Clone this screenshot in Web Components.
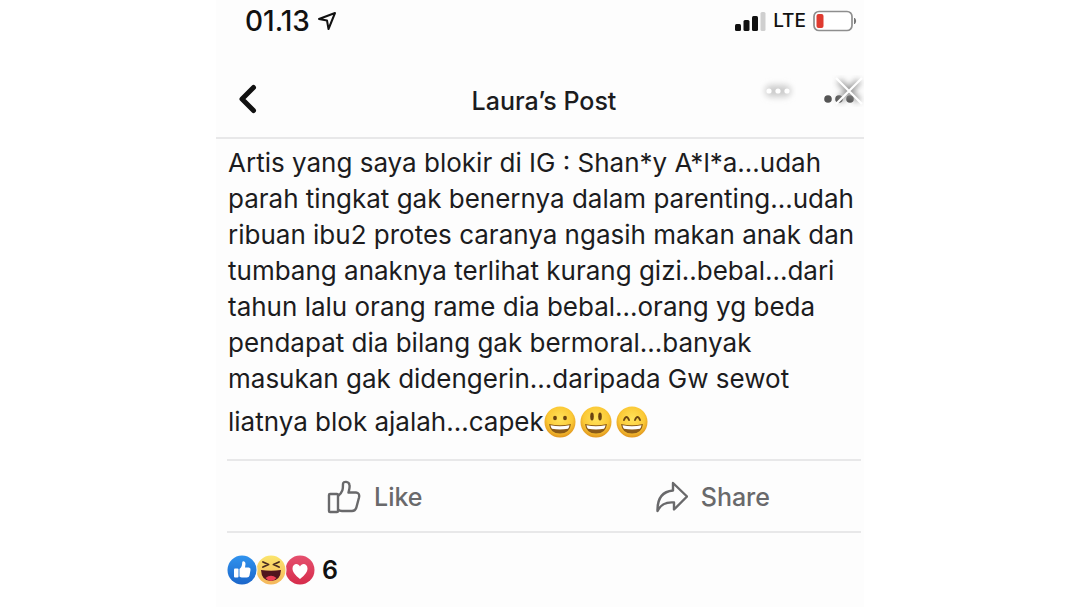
<!DOCTYPE html>
<html lang="id">
<head>
<meta charset="utf-8">
<meta name="viewport" content="width=device-width, initial-scale=1">
<title>Laura’s Post</title>
<style>
body { margin: 0; background: #fff; font-family: Inter, "Liberation Sans", sans-serif; color: #1c1c1e; }
</style>
</head>
<body>
<post-screen>
  <status-bar></status-bar>
  <nav-header>Laura’s Post</nav-header>
  <post-body></post-body>
  <post-actions></post-actions>
  <post-reactions count="6"></post-reactions>
</post-screen>
<script>
function define(name, html) {
  const template = document.createElement('template');
  template.innerHTML = html;
  customElements.define(name, class extends HTMLElement {
    constructor() {
      super();
      this.attachShadow({ mode: 'open' }).append(template.content.cloneNode(true));
    }
    connectedCallback() {
      const count = this.shadowRoot.querySelector('.count');
      if (count) count.textContent = this.getAttribute('count');
      const kind = this.getAttribute('kind');
      if (kind) for (const g of this.shadowRoot.querySelectorAll('g[data-kind]')) {
        if (g.dataset.kind !== kind) g.remove();
      }
    }
  });
}

define('post-screen', `
<style>
:host { display: block; box-sizing: border-box; width: 60%; min-height: 100vh; margin: 0 auto; background: #fdfdfd; }
</style>
<slot></slot>`);

define('status-bar', `
<style>
:host { display: flex; align-items: center; height: 42px; padding: 0 7px 0 29px; color: #111; }
.time { font-size: 28px; font-weight: 500; line-height: 30px; }
.net { font-size: 19px; font-weight: 500; line-height: 24px; margin: 0 7px; }
.arrow { margin-left: 7px; margin-right: auto; }
svg { display: block; }
</style>
<span class="time">01.13</span>
<svg class="arrow" width="20" height="20" viewBox="0 0 20 20" fill="none" stroke="#111" stroke-width="2" stroke-linejoin="round"><path d="M2 8 18 2 11.500 18 10 9.500Z"/></svg>
<svg width="31" height="20" viewBox="0 0 31 20"><g fill="#111"><rect y="13" width="6" height="7" rx="1.500"/><rect x="8.500" y="9" width="6" height="11" rx="1.500"/><rect x="17" y="5" width="6" height="15" rx="1.500"/></g><rect x="25.500" y="1" width="5" height="19" rx="1.500" fill="#cfcfcf"/></svg>
<span class="net">LTE</span>
<svg width="44" height="22" viewBox="0 0 44 22"><rect x="1" y="1.500" width="38" height="19" rx="5" fill="#fff" stroke="#8e8e8e" stroke-width="1.700"/><rect x="3.500" y="4" width="7" height="14" rx="2" fill="#df3b30"/><path d="M41.500 8q2.500 3 0 6z" fill="#777" stroke="#777"/></svg>`);

define('nav-header', `
<style>
:host { display: grid; grid-template-columns: 1fr auto 1fr; align-items: center; position: relative; height: 75px; padding: 20px 0 0 8px; border-bottom: 2px solid #e8e8e9; overflow: hidden; color: #1c1c1e; }
button { display: block; border: 0; background: none; padding: 0; color: inherit; }
.back { padding: 0 14px; justify-self: start; margin-bottom: 2px; }
h1 { margin: 0; padding-top: 2px; font-size: 25px; line-height: 30px; font-weight: 500; }
svg { display: block; }
.more { justify-self: end; margin-right: 8px; margin-bottom: 2px; }
.over { position: absolute; top: 33px; right: 0; display: flex; align-items: center; gap: 36px; }
</style>
<button class="back" aria-label="Back"><svg width="20" height="30" viewBox="0 0 20 30" fill="none" stroke="#111" stroke-width="5" stroke-linecap="round" stroke-linejoin="round"><path d="M15.500 3.500 4 15 15.500 26.500"/></svg></button>
<h1><slot></slot></h1>
<button class="more" aria-label="More"><svg width="32" height="10" viewBox="0 0 32 10" fill="#555"><circle cx="4" cy="5" r="3.800"/><circle cx="15" cy="5" r="3.800"/><circle cx="26" cy="5" r="3.800"/></svg></button>
<div class="over">
  <button aria-label="Options"><svg width="36" height="32" viewBox="0 0 36 32"><defs><filter id="d" x="-50%" y="-100%" width="200%" height="300%"><feGaussianBlur stdDeviation="3"/></filter></defs><rect x="5" y="10" width="26" height="12" rx="6" fill="#ccc" filter="url(#d)"/><g fill="#fff"><circle cx="9" cy="16" r="2.600"/><circle cx="18" cy="16" r="2.600"/><circle cx="27" cy="16" r="2.600"/></g></svg></button>
  <button aria-label="Close"><svg width="32" height="32" viewBox="0 0 32 32" fill="none"><defs><filter id="x" x="-50%" y="-50%" width="200%" height="200%"><feGaussianBlur stdDeviation="3"/></filter></defs><path d="M7 6 27 26M27 6 7 26" stroke="#888" stroke-width="5" filter="url(#x)"/><path d="M4 3 30 29M30 3 4 29" stroke="#fff" stroke-width="2.200"/></svg></button>
</div>`);

define('smile-face', `
<style>:host { display: inline-block; vertical-align: middle; } svg { display: block; }</style>
<svg width="32" height="32" viewBox="0 0 32 32" role="img" aria-label="smile">
<defs><radialGradient id="f" cx=".5" cy=".4" r=".62"><stop offset="0" stop-color="#ffe25a"/><stop offset=".65" stop-color="#fbc936"/><stop offset="1" stop-color="#dd901c"/></radialGradient></defs>
<circle cx="16" cy="16" r="15.500" fill="url(#f)"/>
<g data-kind="grin"><ellipse cx="11" cy="12" rx="1.900" ry="2.300" fill="#6b4310"/><ellipse cx="21" cy="12" rx="1.900" ry="2.300" fill="#6b4310"/></g>
<g data-kind="open"><ellipse cx="12" cy="10.500" rx="1.800" ry="4" fill="#6b4310"/><ellipse cx="20" cy="10.500" rx="1.800" ry="4" fill="#6b4310"/></g>
<g data-kind="happy"><path d="M8 14q2.500-6 5 0M19 14q2.500-6 5 0" fill="none" stroke="#6b4310" stroke-width="1.900" stroke-linecap="round"/></g>
<path d="M5 18q11 2.500 22 0-1 9.500-11 9.500T5 18z" fill="#8a5a18"/>
<path d="M6.500 19.200q9.500 2 19 0-.3 2-1.500 3.500-8 1.600-16 0-1.200-1.500-1.500-3.500z" fill="#fff"/>
</svg>`);

define('post-body', `
<style>
:host { display: block; padding: 6px 0 13px 12px; }
p { margin: 0; font-size: 26px; line-height: 36px; white-space: nowrap; }
.line { display: block; }
.last { display: flex; align-items: center; height: 49px; }
.faces { display: flex; gap: 4px; }
</style>
<p>
<span class="line">Artis yang saya blokir di IG : Shan*y A*l*a...udah</span>
<span class="line">parah tingkat gak benernya dalam parenting...udah</span>
<span class="line">ribuan ibu2 protes caranya ngasih makan anak dan</span>
<span class="line">tumbang anaknya terlihat kurang gizi..bebal...dari</span>
<span class="line">tahun lalu orang rame dia bebal...orang yg beda</span>
<span class="line">pendapat dia bilang gak bermoral...banyak</span>
<span class="line">masukan gak didengerin...daripada Gw sewot</span>
<span class="line last">liatnya blok ajalah...capek<span class="faces"><smile-face kind="grin"></smile-face><smile-face kind="open"></smile-face><smile-face kind="happy"></smile-face></span></span>
</p>`);

define('post-actions', `
<style>
:host { display: flex; justify-content: space-between; margin: 0 3px 0 11px; padding: 0 91px 0 100px; height: 70px; border: solid #e8e8e9; border-width: 2px 0; }
button { display: flex; align-items: center; gap: 13px; padding: 2px 0 0; border: 0; background: none; font: 500 25px/30px Inter, "Liberation Sans", sans-serif; color: #69696b; }
svg { display: block; }
</style>
<button><svg width="34" height="34" viewBox="0 0 34 34" fill="none" stroke="#69696b" stroke-width="2.400" stroke-linejoin="round"><rect x="2" y="14" width="9" height="18" rx="1"/><path d="M11 16C16 12 16 9 16 4 16 1 22 1 22.500 5 23 8 22 10 21.500 12.500H29Q33 13 32 17.500L29.500 27Q28.500 31 25 31H15Q12.500 31 11 29.500"/></svg>Like</button>
<button><svg width="32" height="32" viewBox="0 0 32 32" fill="none" stroke="#69696b" stroke-width="2.400" stroke-linejoin="round"><path d="M17 2 31 15.500 18 28.500V21.500Q6 20.500 1.500 30 1 11 17 9.500Z"/></svg>Share</button>`);

define('post-reactions', `
<style>
:host { display: flex; align-items: center; padding: 21px 0 0 10px; }
svg { display: block; }
.count { margin-left: 6px; font-size: 25px; line-height: 30px; font-weight: 600; color: #111; }
</style>
<svg width="90" height="32" viewBox="0 0 90 32" role="img" aria-label="Like, Haha, Love">
<defs><linearGradient id="b" x2="0" y2="1"><stop stop-color="#3093ee"/><stop offset="1" stop-color="#1b66ca"/></linearGradient><linearGradient id="y" x2="0" y2="1"><stop stop-color="#fbe56c"/><stop offset="1" stop-color="#f5b75c"/></linearGradient><linearGradient id="r" x2="0" y2="1"><stop stop-color="#e5506e"/><stop offset="1" stop-color="#d62c4b"/></linearGradient></defs>
<circle cx="74" cy="16" r="14.500" fill="url(#r)"/>
<path d="M74 25C69 21 66.500 18 66.500 14.500 66.500 9 72.500 8.500 74 12.500 75.500 8.500 81.500 9 81.500 14.500 81.500 18 79 21 74 25Z" fill="#fff"/>
<circle cx="45" cy="16" r="15.500" fill="#fdfdfd"/><circle cx="45" cy="16" r="14.500" fill="url(#y)"/>
<path d="M37 8 42.500 10.500 37 13M53 8 47.500 10.500 53 13" fill="none" stroke="#4a2d20" stroke-width="1.900" stroke-linecap="round" stroke-linejoin="round"/>
<path d="M35 16Q45 17.500 55 16 54.500 27 45 27T35 16Z" fill="#51151d"/><path d="M39.500 24Q45 19.500 50.500 24 48 27 45 27T39.500 24Z" fill="#ee4055"/>
<circle cx="16" cy="16" r="15.500" fill="#fdfdfd"/><circle cx="16" cy="16" r="14.500" fill="url(#b)"/>
<rect x="8" y="14.500" width="4.500" height="9" rx="1" fill="#fff"/><path d="M13.500 15C16 13 16 11 16.200 8.500 16.500 6.500 19.500 7 19.500 10L19 13.500H23Q25 14 24.500 16L23.500 21.500Q23 23.500 21 23.500H16Q14.500 23.500 13.500 22.500Z" fill="#fff"/>
</svg>
<span class="count"></span>`);
</script>
</body>
</html>
